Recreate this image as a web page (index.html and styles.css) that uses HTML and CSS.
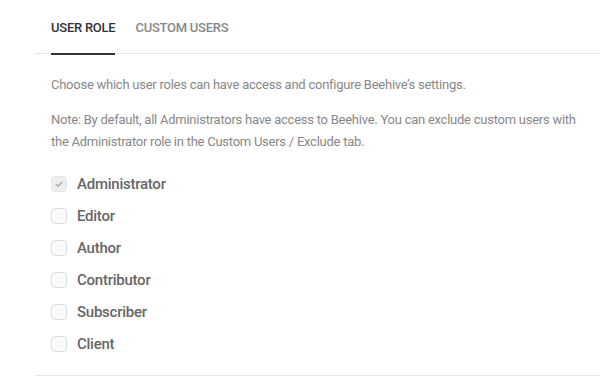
FILE: index.html
```html
<!DOCTYPE html>
<html lang="en">
<head>
    <meta charset="UTF-8">
    <meta name="viewport" content="width=device-width, initial-scale=1.0">
    <title>Beehive Settings</title>
    <link rel="stylesheet" href="styles.css">
</head>
<body>
    <div class="settings-box">
        <div class="tabs">
            <div class="tab active">User Role</div>
            <div class="tab">Custom Users</div>
        </div>

        <div class="tab-content">
            <p class="desc">Choose which user roles can have access and configure Beehive’s settings.</p>
            <p class="desc note">Note: By default, all Administrators have access to Beehive. You can exclude custom users with the Administrator role in the Custom Users / Exclude tab.</p>

            <ul class="roles">
                <li class="role">
                    <span class="checkbox checked disabled">
                        <svg width="10" height="10" viewBox="0 0 10 10"><path d="M1.8 5.2 L4 7.3 L8.3 2.8" fill="none" stroke="#aaa" stroke-width="1.4"/></svg>
                    </span>
                    <span class="role-name">Administrator</span>
                </li>
                <li class="role"><span class="checkbox"></span><span class="role-name">Editor</span></li>
                <li class="role"><span class="checkbox"></span><span class="role-name">Author</span></li>
                <li class="role"><span class="checkbox"></span><span class="role-name">Contributor</span></li>
                <li class="role"><span class="checkbox"></span><span class="role-name">Subscriber</span></li>
                <li class="role"><span class="checkbox"></span><span class="role-name">Client</span></li>
            </ul>
        </div>
    </div>
</body>
</html>
```

FILE: styles.css
```css
:root {
    --text-dark: #333333;
    --text-muted: #888888;
    --label: #666666;
    --border: #e6e6e6;
}

* {
    margin: 0;
    padding: 0;
    box-sizing: border-box;
}

body {
    font-family: Roboto, 'Liberation Sans', Arial, sans-serif;
    letter-spacing: -0.25px;
    background: #ffffff;
    color: var(--text-muted);
    width: 600px;
    overflow: hidden;
}

.settings-box {
    margin-left: 35px;
    border-bottom: 1px solid var(--border);
}

.tabs {
    display: flex;
    gap: 20px;
    padding-left: 16px;
    height: 54px;
    border-bottom: 1px solid var(--border);
}

.tab {
    font-size: 13px;
    font-weight: 500;
    line-height: 20px;
    text-transform: uppercase;
    color: var(--text-muted);
    padding-top: 18px;
    height: 55px;
    margin-bottom: -1px;
    border-bottom: 2px solid transparent;
}

.tab.active {
    color: var(--text-dark);
    border-bottom-color: #333333;
}

.tab-content {
    padding: 20px 16px 15px;
}

.desc {
    font-size: 13px;
    line-height: 22px;
}

.note {
    margin-top: 13px;
}

.roles {
    list-style: none;
    margin-top: 15px;
}

.role {
    display: flex;
    align-items: center;
    gap: 10px;
    height: 32px;
}

.checkbox {
    width: 16px;
    height: 16px;
    border: 1px solid #dddddd;
    border-radius: 4px;
    background: #fafafa;
    display: flex;
    align-items: center;
    justify-content: center;
}

.checkbox.checked {
    background: #eeeeee;
    border-color: #e6e6e6;
}

.role-name {
    font-size: 15px;
    font-weight: 500;
    line-height: 22px;
    color: var(--label);
}
```
